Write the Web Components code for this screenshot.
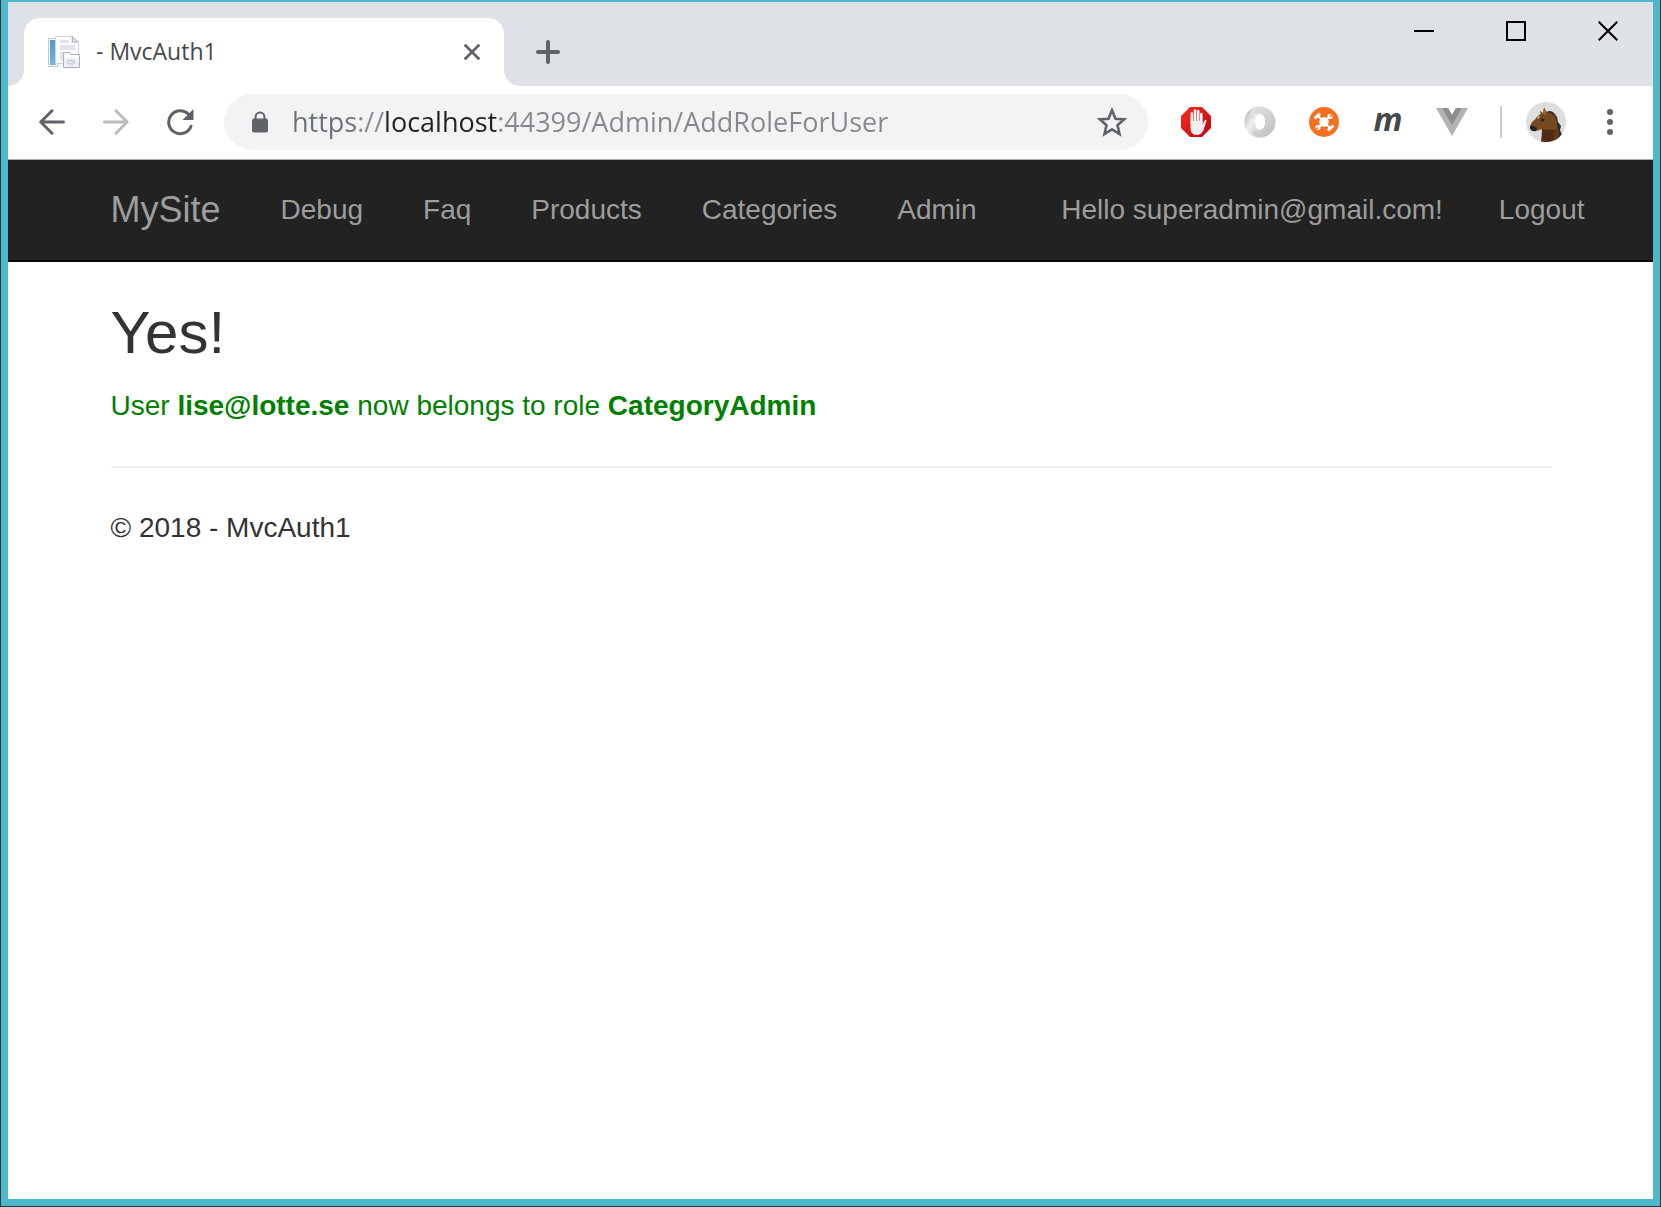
<!DOCTYPE html>
<html lang="en">
<head>
<meta charset="utf-8">
<title>- MvcAuth1</title>
<style>
html, body { height: 100%; margin: 0; }
body { background: #fff; font-family: "Liberation Sans", Arial, sans-serif; }
</style>
</head>
<body>
<browser-window>
  <tab-strip slot="chrome">
    <browser-tab>- MvcAuth1</browser-tab>
  </tab-strip>
  <tool-bar slot="chrome"></tool-bar>
  <site-nav>
    <a slot="brand" href="#">MySite</a>
    <a href="#">Debug</a>
    <a href="#">Faq</a>
    <a href="#">Products</a>
    <a href="#">Categories</a>
    <a href="#">Admin</a>
    <a slot="account" href="#">Hello superadmin@gmail.com!</a>
    <button slot="logout" type="button">Logout</button>
  </site-nav>
  <site-page>
    <span slot="title">Yes!</span>
    <span slot="message">User <strong>lise@lotte.se</strong> now belongs to role <strong>CategoryAdmin</strong></span>
    <span slot="footer">© 2018 - MvcAuth1</span>
  </site-page>
</browser-window>

<script>
const define = (name, html) => customElements.define(name, class extends HTMLElement {
  constructor() {
    super();
    this.attachShadow({ mode: 'open' }).innerHTML = html;
  }
});

const icons = {
  back: [26, 26, '<path d="M24.5 13H2M13 1.8 1.8 13 13 24.2" fill="none" stroke="#5f6368" stroke-width="3" stroke-linecap="round" stroke-linejoin="round"/>'],
  forward: [26, 26, '<path d="M1.5 13H24M13 1.8 24.2 13 13 24.2" fill="none" stroke="#babcbe" stroke-width="3" stroke-linecap="round" stroke-linejoin="round"/>'],
  reload: [28, 28, '<path d="M22.3 6A11.5 11.5 0 1 0 25 18.2" fill="none" stroke="#5f6368" stroke-width="3" stroke-linecap="round"/><path d="M27.5 1v11h-11z" fill="#5f6368"/>'],
  lock: [16, 22, '<path d="M3.6 9V5.8a4.4 4.4 0 0 1 8.8 0V9" fill="none" stroke="#5f6368" stroke-width="2"/><rect y="7.6" width="16" height="14" rx="2" fill="#5f6368"/>'],
  star: [30, 30, '<path d="M15 3.2 18.5 11.7 27 12.4 20.5 18.2 22.5 27 15 22.4 7.5 27 9.5 18.2 3 12.4 11.5 11.7Z" fill="none" stroke="#5f6368" stroke-width="2.6"/>'],
  close: [16, 16, '<path d="M1.5 1.5l13 13M14.5 1.5l-13 13" stroke="#5f6368" stroke-width="2.8" stroke-linecap="round"/>'],
  plus: [24, 24, '<path d="M12 2v20M2 12h20" stroke="#5f6368" stroke-width="4" stroke-linecap="round"/>'],
  minimize: [20, 20, '<path d="M0 10h20" stroke="#000" stroke-width="2"/>'],
  maximize: [20, 20, '<rect x="1" y="1" width="18" height="18" fill="none" stroke="#000" stroke-width="2"/>'],
  quit: [20, 20, '<path d="M.7.7l18.6 18.6M19.3.7.7 19.3" stroke="#000" stroke-width="2"/>'],
  dots: [6, 26, '<g fill="#5f6368"><circle cx="3" cy="3" r="3"/><circle cx="3" cy="13" r="3"/><circle cx="3" cy="23" r="3"/></g>'],
  favicon: [32, 32, '<defs><linearGradient id="b" x2="0" y2="1"><stop stop-color="#4d97cb"/><stop offset="1" stop-color="#78b7e0"/></linearGradient></defs><path d="M.5 2.5H10V30.5H.5Z" fill="#f6f8fa" stroke="#bccad5"/><path d="M2 4h6v25H2z" fill="url(#b)"/><path d="M7.5.5H24l6.500 6V27.500H7.500Z" fill="#fbfbfc" stroke="#d2d5da"/><path d="M24.3.5v5.500h6Z" fill="#e6e7e9" stroke="#a6aab0"/><path d="M12 4h9v3h-9zM12 9h15v5H12zM12 16h5v8h-5z" fill="#e1e4e9"/><path d="M15.500 18.500V16.500h6l1.500 2h8.500v13H15.500Z" fill="#edf0f5" stroke="#aab0ba"/><path d="M16 19h15v3H16z" fill="#fff"/><rect x="19.500" y="24.500" width="7" height="3.500" rx="1" fill="#dde1e8" stroke="#c2c7d1"/>'],
  block: [30, 30, '<defs><linearGradient id="r" x2="1" y2="1"><stop stop-color="#ff2a22"/><stop offset="1" stop-color="#b50b10"/></linearGradient></defs><path d="M9 0h12l9 9v12l-9 9H9l-9-9V9Z" fill="url(#r)"/><path d="M10.8 16V6.5M14 15V3.5M17.2 15V4M20.3 16V7" fill="none" stroke="#f7f7f7" stroke-width="2.6" stroke-linecap="round"/><path d="M9.5 14h12v4l2-4.5q1.500-1.500 2 0L22.500 23q-2 5-7 5-6 0-6-7Z" fill="#f0f0f0"/>'],
  json: [32, 32, '<defs><linearGradient id="j" x2="1" y2="1"><stop stop-color="#aaa"/><stop offset=".45" stop-color="#eee"/><stop offset="1" stop-color="#c0c0c0"/></linearGradient><linearGradient id="k" x2="1" y2="1"><stop stop-color="#e9e9e9"/><stop offset="1" stop-color="#bdbdbd"/></linearGradient></defs><path fill-rule="evenodd" d="M16 .5a15.500 15.500 0 1 1 0 31 15.500 15.500 0 1 1 0-31ZM16 8c-3 0-5 3-5 8s2 8 5 8 5-3 5-8-2-8-5-8Z" fill="url(#k)"/><path d="M16 .5C7 .5.5 7.500.5 16S7 31.500 16 31.500C10 30 8 27 8 24c4 3 10 1 12-4-4 7-9 3-9-4 0-5 2-8 5-8C12 6 7 8 5 12 6 5 10 2 16 .5Z" fill="url(#j)"/>'],
  rescue: [30, 30, '<circle cx="15" cy="15" r="15" fill="#f37021"/><path d="m9 9 12 12M21 9 9 21" stroke="#fff" stroke-width="2"/><g fill="#fff"><circle cx="15" cy="15" r="4.800"/><path d="m4.500 10.500 5.500-5 2 2-5.500 5ZM18 22.500l5.500-5 2 2-5.500 5Z"/><circle cx="21" cy="9.500" r="2.600"/><circle cx="9" cy="20.500" r="2.600"/></g><path d="m21 9.500 3.500-3.500M9 20.500l-3.500 3.500" stroke="#f37021" stroke-width="1.500"/>'],
  vue: [32, 28, '<path d="M0 0h12l4 7 4-7h12L16 28Z" fill="#b3b3b3"/><path d="M6 0h6l4 7 4-7h6L16 17Z" fill="#8e8e8e"/>'],
  horse: [40, 40, '<defs><clipPath id="c"><circle cx="20" cy="20" r="20"/></clipPath></defs><circle cx="20" cy="20" r="20" fill="#dedede"/><g clip-path="url(#c)"><path d="M19 11q5-4 9 0l3 4 1 5 3 4-1 4 2 5-4 5-8-20Z" fill="#292b31"/><path d="M16 26q6-1 11-5l5 6 1 13H15q1-7 1-14Z" fill="#4e2b14"/><path d="m27 21 1 19h5V28Z" fill="#63391a"/><path d="m17 11 1-5.500 3 5q6 0 8 4 3 6 2 12-4 2-11 1-5-1-8 1-5 1-8-2 0-6 5-9 3-5 8-6.500Z" fill="#78481d"/><path d="M4 24q4-1 7 2l-1 3q-4 1-6-2Z" fill="#22242a"/><path d="m17 11 1-5.500 2.500 5-1.500 3Z" fill="#a45e22"/><path d="m14 9 3 2-2 1Z" fill="#5a3416"/><ellipse cx="16.500" cy="18" rx="2" ry="1.600" fill="#252525"/><path d="m11 16 2.500-2.500-.5 3Z" fill="#ddd1bd"/></g>']
};

customElements.define('line-icon', class extends HTMLElement {
  constructor() {
    super();
    this.attachShadow({ mode: 'open' });
  }
  connectedCallback() {
    const [w, h, body] = icons[this.getAttribute('name')];
    this.shadowRoot.innerHTML = `<style>:host{display:block;flex:none}svg{display:block}</style>
      <svg width="${w}" height="${h}" viewBox="0 0 ${w} ${h}" aria-hidden="true">${body}</svg>`;
  }
});

const buttonReset = `button{margin:0;padding:0;border:0;background:none;color:inherit;font:inherit;
  display:flex;align-items:center;justify-content:center;flex:none}`;

define('browser-tab', `<style>
  :host{display:flex;align-items:center;gap:16px;box-sizing:border-box;flex:0 1 480px;height:68px;
    padding:0 16px 0 24px;margin-left:16px;background:#fff;border-radius:16px 16px 0 0;position:relative;
    font:23px/32px "Open Sans","Noto Sans",sans-serif;color:#45494d}
  :host::before,:host::after{content:"";position:absolute;bottom:0;width:16px;height:16px}
  :host::before{right:100%;background:radial-gradient(circle at 0 0,transparent 15.5px,#fff 16px)}
  :host::after{left:100%;background:radial-gradient(circle at 100% 0,transparent 15.5px,#fff 16px)}
  span{flex:1;padding-bottom:2px;white-space:nowrap;overflow:hidden}
  ${buttonReset}
  button{width:32px;height:32px}
  </style>
  <line-icon name="favicon"></line-icon><span><slot></slot></span>
  <button type="button" aria-label="Close tab"><line-icon name="close"></line-icon></button>`);

define('tab-strip', `<style>
  :host{display:flex;align-items:flex-end;height:84px;background:#dee1e6}
  ${buttonReset}
  .new{width:40px;height:68px;margin-left:24px}
  .controls{display:flex;gap:2px;margin-left:auto;align-self:flex-start}
  .controls button{width:90px;height:58px}
  </style>
  <slot></slot>
  <button class="new" type="button" aria-label="New tab"><line-icon name="plus"></line-icon></button>
  <div class="controls">
    <button type="button" aria-label="Minimize"><line-icon name="minimize"></line-icon></button>
    <button type="button" aria-label="Maximize"><line-icon name="maximize"></line-icon></button>
    <button type="button" aria-label="Close"><line-icon name="quit"></line-icon></button>
  </div>`);

define('address-box', `<style>
  :host{display:flex;align-items:center;gap:24px;flex:1;min-width:0;height:56px;box-sizing:border-box;
    padding:0 20px 0 28px;border-radius:28px;background:#f1f3f4}
  input{flex:1;min-width:0;height:40px;margin:0;padding:0;border:0;outline:0;
    font:27px/40px "Open Sans","Noto Sans",sans-serif;color:transparent;
    background:linear-gradient(90deg,#6b7075 65px,#85898d 65px 92px,#202124 92px 205px,#85898d 205px);
    -webkit-background-clip:text;background-clip:text}
  ${buttonReset}
  button{width:32px;height:32px}
  </style>
  <line-icon name="lock"></line-icon>
  <input type="text" aria-label="Address" value="https://localhost:44399/Admin/AddRoleForUser" spellcheck="false">
  <button type="button" aria-label="Bookmark this page"><line-icon name="star"></line-icon></button>`);

define('tool-bar', `<style>
  :host{display:flex;align-items:center;height:72px;padding:0 23px 1px 12px;background:#fff;border-bottom:1px solid #a9aaab}
  ${buttonReset}
  button{width:64px;height:56px}
  address-box{margin:0 16px 0 12px}
  .m{font:italic bold 32px/40px "Open Sans","Noto Sans",sans-serif;color:#444849}
  .m span{display:block;padding-bottom:6px}
  hr{width:2px;height:32px;margin:0 24px 0 16px;border:0;background:#ccc}
  .avatar{width:40px}
  .menu{width:40px;margin-left:24px}
  </style>
  <button type="button" aria-label="Back"><line-icon name="back"></line-icon></button>
  <button type="button" aria-label="Forward"><line-icon name="forward"></line-icon></button>
  <button type="button" aria-label="Reload"><line-icon name="reload"></line-icon></button>
  <address-box></address-box>
  <button type="button" aria-label="Ad blocker"><line-icon name="block"></line-icon></button>
  <button type="button" aria-label="JSON viewer"><line-icon name="json"></line-icon></button>
  <button type="button" aria-label="Support"><line-icon name="rescue"></line-icon></button>
  <button type="button" class="m"><span>m</span></button>
  <button type="button" aria-label="Vue devtools"><line-icon name="vue"></line-icon></button>
  <hr>
  <button type="button" class="avatar" aria-label="Profile"><line-icon name="horse"></line-icon></button>
  <button type="button" class="menu" aria-label="Menu"><line-icon name="dots"></line-icon></button>`);

define('site-nav', `<style>
  :host{display:block;background:#222;border-bottom:2px solid #080808;font-size:28px;line-height:40px}
  nav{display:flex;box-sizing:border-box;max-width:1500px;margin:0 auto}
  .account{display:flex;margin-left:auto;margin-right:-30px}
  ::slotted(*){display:block;padding:30px;color:#9d9d9d;text-decoration:none;white-space:nowrap;
    border:0;margin:0;background:none;font:inherit}
  ::slotted([slot=brand]){font-size:36px}
  ::slotted(button){padding:30px 26px}
  </style>
  <nav><slot name="brand"></slot><slot></slot>
  <div class="account"><slot name="account"></slot><slot name="logout"></slot></div></nav>`);

define('site-page', `<style>
  :host{display:block;box-sizing:border-box;width:100%;max-width:1500px;margin:0 auto;padding:38px 30px;
    font-size:28px;line-height:40px;color:#333}
  h2{margin:0 0 20px;font-size:60px;line-height:66px;font-weight:500}
  p{margin:0}
  .ok{color:green}
  hr{height:2px;margin:40px 0;border:0;background:#eee}
  </style>
  <main><h2><slot name="title"></slot></h2><p class="ok"><slot name="message"></slot></p></main>
  <hr>
  <footer><p><slot name="footer"></slot></p></footer>`);

define('browser-window', `<style>
  :host{display:flex;flex-direction:column;box-sizing:border-box;min-height:100vh;
    border:1px solid #31333c;border-top:0;background:#4dbacb;padding:2px 7px 7px}
  .view{flex:1;background:#fff}
  </style>
  <slot name="chrome"></slot>
  <div class="view"><slot></slot></div>`);
</script>
</body>
</html>
